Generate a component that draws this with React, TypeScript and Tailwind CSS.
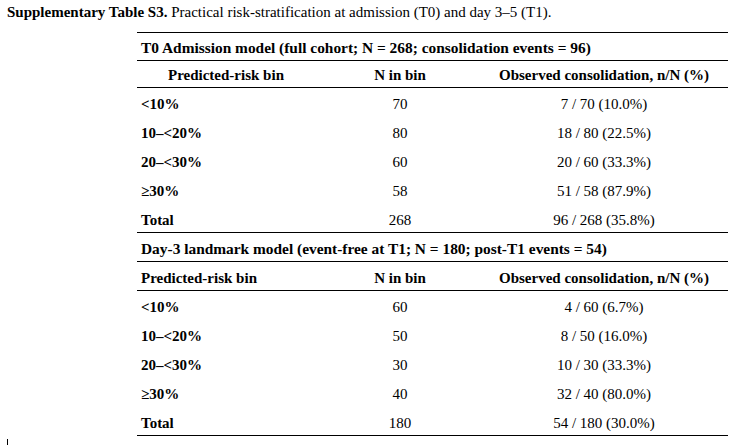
import React from "react";

type Row = { bin: string; n: string; obs: string };

const t0: Row[] = [
  { bin: "<10%", n: "70", obs: "7 / 70 (10.0%)" },
  { bin: "10–<20%", n: "80", obs: "18 / 80 (22.5%)" },
  { bin: "20–<30%", n: "60", obs: "20 / 60 (33.3%)" },
  { bin: "≥30%", n: "58", obs: "51 / 58 (87.9%)" },
  { bin: "Total", n: "268", obs: "96 / 268 (35.8%)" },
];

const t1: Row[] = [
  { bin: "<10%", n: "60", obs: "4 / 60 (6.7%)" },
  { bin: "10–<20%", n: "50", obs: "8 / 50 (16.0%)" },
  { bin: "20–<30%", n: "30", obs: "10 / 30 (33.3%)" },
  { bin: "≥30%", n: "40", obs: "32 / 40 (80.0%)" },
  { bin: "Total", n: "180", obs: "54 / 180 (30.0%)" },
];

function BodyRows({ rows, lastBorder }: { rows: Row[]; lastBorder: boolean }) {
  return (
    <>
      {rows.map((r, i) => (
        <div
          key={r.bin}
          className={
            "grid grid-cols-[178px_170px_243px] h-[29px] pt-[4px] items-center " +
            (i === rows.length - 1 && lastBorder ? "border-b border-black" : "")
          }
        >
          <div className="pl-[4px] font-bold">{r.bin}</div>
          <div className="text-center">{r.n}</div>
          <div className="text-center pr-[5px]">{r.obs}</div>
        </div>
      ))}
    </>
  );
}

export default function App() {
  return (
    <div
      className="relative w-[737px] h-[445px] bg-white text-black text-[15px] leading-[1.15]"
      style={{ fontFamily: '"Liberation Serif", "Times New Roman", serif' }}
    >
      <div className="pl-[7px] pt-[4px]">
        <span className="font-bold">Supplementary Table S3.</span> Practical risk-stratification at admission (T0) and
        day 3–5 (T1).
      </div>
      <div className="ml-[137px] mt-[11px] w-[591px] border-t border-black">
        <div className="h-[28px] pt-[3px] flex items-center pl-[4px] font-bold text-[15.4px] border-b border-black">
          T0 Admission model (full cohort; N = 268; consolidation events = 96)
        </div>
        <div className="grid grid-cols-[178px_170px_243px] h-[27px] pt-[3px] items-center font-bold border-b border-black">
          <div className="text-center">Predicted-risk bin</div>
          <div className="text-center">N in bin</div>
          <div className="text-center pr-[5px]">Observed consolidation, n/N (%)</div>
        </div>
        <BodyRows rows={t0} lastBorder />
        <div className="h-[29px] pt-[4px] flex items-center pl-[4px] font-bold text-[15.4px] border-b border-black">
          Day-3 landmark model (event-free at T1; N = 180; post-T1 events = 54)
        </div>
        <div className="grid grid-cols-[178px_170px_243px] h-[29px] pt-[4px] items-center font-bold border-b border-black">
          <div className="pl-[4px]">Predicted-risk bin</div>
          <div className="text-center">N in bin</div>
          <div className="text-center pr-[5px]">Observed consolidation, n/N (%)</div>
        </div>
        <BodyRows rows={t1} lastBorder />
      </div>
      <div className="absolute left-[7px] top-[439px] w-px h-[6px] bg-black" />
    </div>
  );
}
